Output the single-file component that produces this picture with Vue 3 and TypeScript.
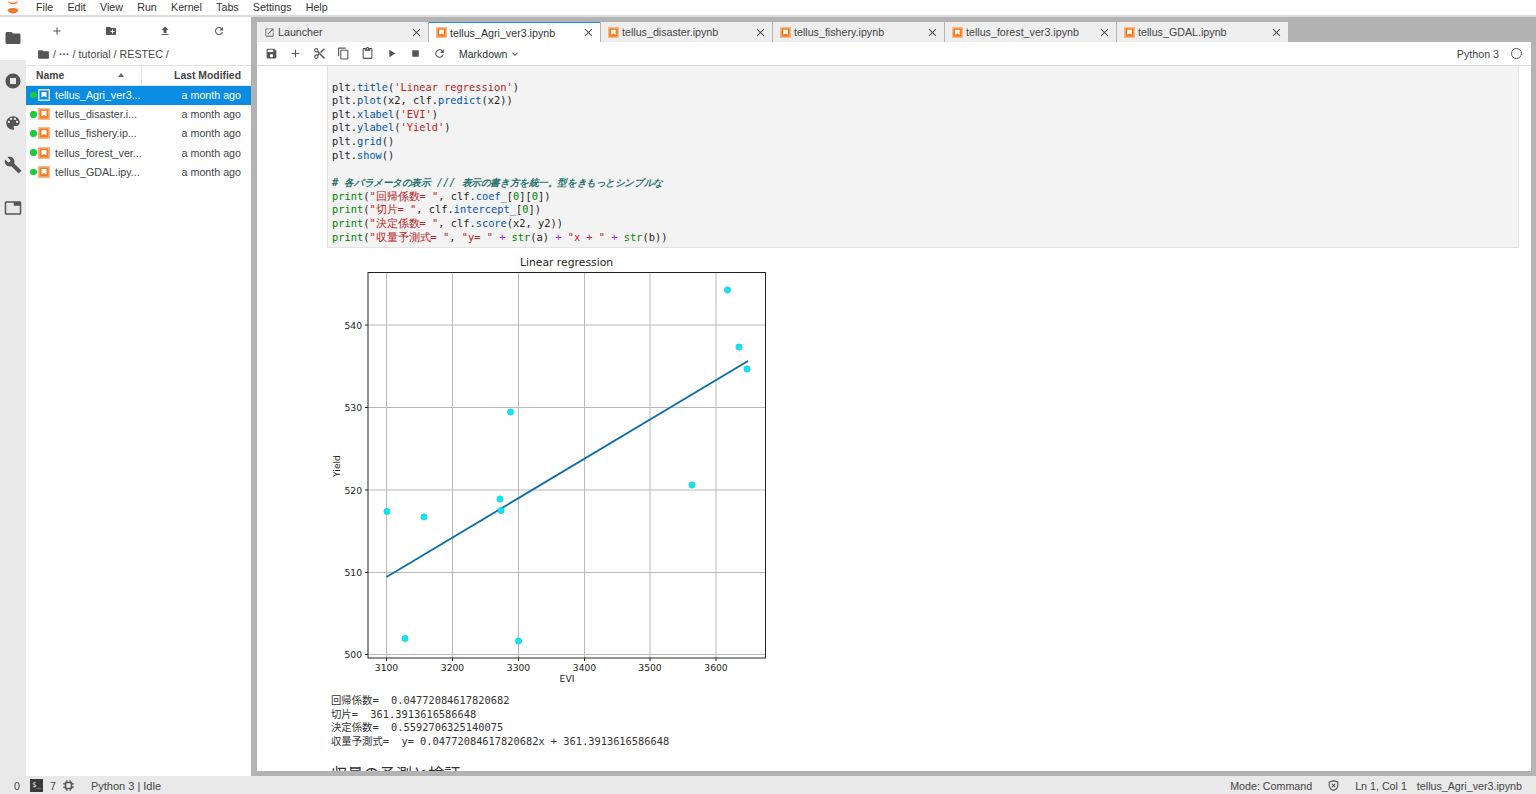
<template>
  <div class="lab">
    <div class="menubar">
      <svg class="logo" viewBox="0 0 14 16">
        <path d="M1.5 1.5c2 3 8.500 3 11 0-1 5-10 5-11 0z" fill="#f37726" />
        <path d="M1.500 11c2 -2.600 8.500 -2.600 11 0-1.500 4.500-9.500 4.500-11 0z" fill="#f37726" />
      </svg>
      <span v-for="m in menus" :key="m" class="menu-item">{{ m }}</span>
    </div>

    <div class="main">
      <div class="sidetabs">
        <div class="sidetab active">
          <svg viewBox="0 0 24 24"><path :d="icons.folder" /></svg>
        </div>
        <div class="sidetab"><svg viewBox="0 0 24 24"><path :d="icons.running" /></svg></div>
        <div class="sidetab"><svg viewBox="0 0 24 24"><path :d="icons.palette" /></svg></div>
        <div class="sidetab"><svg viewBox="0 0 24 24"><path :d="icons.build" /></svg></div>
        <div class="sidetab last"><svg viewBox="0 0 24 24"><path :d="icons.tab" /></svg></div>
      </div>

      <div class="filebrowser">
        <div class="fb-toolbar">
          <svg v-for="i in fbTools" :key="i" viewBox="0 0 24 24"><path :d="icons[i]" /></svg>
        </div>
        <div class="crumbs">
          <svg viewBox="0 0 24 24"><path :d="icons.folder" /></svg>
          <span>/ <b>···</b> / tutorial / RESTEC /</span>
        </div>
        <div class="list-head">
          <div class="col-name">
            <span>Name</span>
            <i class="sort-arrow"></i>
          </div>
          <div class="col-mod">Last Modified</div>
        </div>
        <div
          v-for="(f, idx) in files"
          :key="f"
          class="file-row"
          :class="{ selected: idx === 0 }"
        >
          <i class="running-dot"></i>
          <svg class="nb-icon" viewBox="0 0 12 12">
            <rect x="0" y="0" width="12" height="12" rx="0.500" class="nb-outer" />
            <rect x="1.500" y="1.500" width="9" height="9" class="nb-inner" />
            <path d="M3.500 3h5v5.500l-2.500-1.500-2.500 1.500z" class="nb-mark" />
          </svg>
          <span class="file-name">{{ f }}</span>
          <span class="file-date">a month ago</span>
        </div>
      </div>

      <div class="dock">
        <div class="tabbar">
          <div
            v-for="(t, idx) in tabs"
            :key="t"
            class="tab"
            :class="{ current: idx === 1 }"
          >
            <svg v-if="idx === 0" class="tab-icon" viewBox="0 0 24 24"><path :d="icons.launch" /></svg>
            <svg v-else class="tab-icon" viewBox="0 0 12 12">
              <rect x="0" y="0" width="12" height="12" fill="#f9b888" />
              <rect x="1.500" y="1.500" width="9" height="9" fill="#f57c20" />
              <path d="M3.500 3h5v5.500l-2.500-1.500-2.500 1.500z" fill="#fff" />
            </svg>
            <span class="tab-label">{{ t }}</span>
            <svg class="tab-close" viewBox="0 0 24 24"><path :d="icons.close" /></svg>
          </div>
        </div>

        <div class="nb-toolbar">
          <svg v-for="b in nbTools" :key="b" class="tool" viewBox="0 0 24 24"><path :d="icons[b]" /></svg>
          <span class="cell-type">Markdown</span>
          <svg class="chev" viewBox="0 0 24 24"><path :d="icons.chevron" /></svg>
          <span class="kernel-name">Python 3</span>
          <i class="kernel-idle"></i>
        </div>

        <div class="notebook">
          <pre class="code-cell"><code><span class="n">plt</span>.<span class="m">title</span>(<span class="s">'Linear regression'</span>)
<span class="n">plt</span>.<span class="m">plot</span>(x2, clf.<span class="m">predict</span>(x2))
<span class="n">plt</span>.<span class="m">xlabel</span>(<span class="s">'EVI'</span>)
<span class="n">plt</span>.<span class="m">ylabel</span>(<span class="s">'Yield'</span>)
<span class="n">plt</span>.<span class="m">grid</span>()
<span class="n">plt</span>.<span class="m">show</span>()

<span class="c"># <span class="jc">各パラメータの表示</span> /// <span class="jc">表示の書き方を統一。型をきもっとシンプルな</span></span>
<span class="b">print</span>(<span class="s">"<span class="j">回帰係数</span>= "</span>, clf.<span class="m">coef_</span>[<span class="d">0</span>][<span class="d">0</span>])
<span class="b">print</span>(<span class="s">"<span class="j">切片</span>= "</span>, clf.<span class="m">intercept_</span>[<span class="d">0</span>])
<span class="b">print</span>(<span class="s">"<span class="j">決定係数</span>= "</span>, clf.<span class="m">score</span>(x2, y2))
<span class="b">print</span>(<span class="s">"<span class="j">収量予測式</span>= "</span>, <span class="s">"y= "</span> <span class="o">+</span> <span class="b">str</span>(a) <span class="o">+</span> <span class="s">"x + "</span> <span class="o">+</span> <span class="b">str</span>(b))</code></pre>

          <svg class="chart" viewBox="327 255 460 435" width="460" height="435">
            <g stroke="#b9b9b9" stroke-width="1" fill="none">
              <line v-for="t in xTicks" :key="t.l" :x1="t.x" :x2="t.x" y1="272.500" y2="658" />
              <line v-for="t in yTicks" :key="t.l" x1="368" x2="765.500" :y1="t.y" :y2="t.y" />
            </g>
            <g stroke="#222" stroke-width="1">
              <line v-for="t in xTicks" :key="t.l" :x1="t.x" :x2="t.x" y1="658" y2="661" />
              <line v-for="t in yTicks" :key="t.l" x1="365" x2="368" :y1="t.y" :y2="t.y" />
            </g>
            <line x1="386.500" y1="577" x2="748" y2="361" stroke="#0a6fa8" stroke-width="1.800" />
            <circle
              v-for="(p, i) in points"
              :key="i"
              :cx="p[0]"
              :cy="p[1]"
              r="3.200"
              fill="#0ee6f8"
              stroke="#2ab5c8"
              stroke-width="0.500"
            />
            <rect x="368" y="272.500" width="397.500" height="385.500" fill="none" stroke="#222" stroke-width="1" />
            <g class="ticks">
              <text v-for="t in xTicks" :key="t.l" :x="t.x" y="671" text-anchor="middle">{{ t.l }}</text>
              <text v-for="t in yTicks" :key="t.l" x="362" :y="t.y + 3.500" text-anchor="end">{{ t.l }}</text>
              <text x="567" y="682" text-anchor="middle">EVI</text>
              <text x="0" y="0" text-anchor="middle" transform="translate(340 466) rotate(-90)">Yield</text>
            </g>
            <text class="chart-title" x="566.500" y="266" text-anchor="middle">Linear regression</text>
          </svg>

          <pre class="stdout">回帰係数=  0.04772084617820682
切片=  361.3913616586648
決定係数=  0.5592706325140075
収量予測式=  y= 0.04772084617820682x + 361.3913616586648</pre>

          <h2 class="next-heading">収量の予測と検証</h2>
        </div>
      </div>
    </div>

    <div class="statusbar">
      <span class="st-count">0</span>
      <span class="term-badge">$_</span>
      <span class="st-count st-seven">7</span>
      <svg class="chip" viewBox="0 0 24 24"><path :d="icons.chip" fill-rule="evenodd" /></svg>
      <span class="st-kernel">Python 3 | Idle</span>
      <span class="st-mode">Mode: Command</span>
      <svg class="shield" viewBox="0 0 24 24">
        <path d="M12 3l8 3v5c0 5-3.500 8.500-8 10-4.500-1.500-8-5-8-10V6z" fill="none" stroke="#555" stroke-width="2" />
        <path d="M9 9l6 6M15 9l-6 6" stroke="#555" stroke-width="2" />
      </svg>
      <span class="st-pos">Ln 1, Col 1</span>
      <span class="st-file">tellus_Agri_ver3.ipynb</span>
    </div>
  </div>
</template>

<script setup lang="ts">
const menus = ['File', 'Edit', 'View', 'Run', 'Kernel', 'Tabs', 'Settings', 'Help']

const files = [
  'tellus_Agri_ver3...',
  'tellus_disaster.i...',
  'tellus_fishery.ip...',
  'tellus_forest_ver...',
  'tellus_GDAL.ipy...',
]

const tabs = [
  'Launcher',
  'tellus_Agri_ver3.ipynb',
  'tellus_disaster.ipynb',
  'tellus_fishery.ipynb',
  'tellus_forest_ver3.ipynb',
  'tellus_GDAL.ipynb',
]

const icons: Record<string, string> = {
  folder: 'M10 4H4c-1.100 0-2 .9-2 2v12c0 1.100.9 2 2 2h16c1.100 0 2-.9 2-2V8c0-1.100-.9-2-2-2h-8l-2-2z',
  newFolder:
    'M20 6h-8l-2-2H4c-1.110 0-1.990.89-1.990 2L2 18c0 1.110.89 2 2 2h16c1.110 0 2-.89 2-2V8c0-1.110-.89-2-2-2zm-1 8h-3v3h-2v-3h-3v-2h3V9h2v3h3v2z',
  add: 'M19 13h-6v6h-2v-6H5v-2h6V5h2v6h6v2z',
  upload: 'M9 16h6v-6h4l-7-7-7 7h4v6zm-4 2h14v2H5z',
  refresh:
    'M17.650 6.350C16.200 4.900 14.210 4 12 4c-4.420 0-7.990 3.580-7.990 8s3.570 8 7.990 8c3.730 0 6.840-2.550 7.730-6h-2.080c-.82 2.330-3.040 4-5.650 4-3.310 0-6-2.690-6-6s2.690-6 6-6c1.660 0 3.140.69 4.220 1.780L13 11h7V4l-2.350 2.350z',
  save: 'M17 3H5c-1.110 0-2 .9-2 2v14c0 1.100.89 2 2 2h14c1.100 0 2-.9 2-2V7l-4-4zm-5 16c-1.660 0-3-1.340-3-3s1.340-3 3-3 3 1.340 3 3-1.340 3-3 3zm3-10H5V5h10v4z',
  cut: 'M9.640 7.640c.23-.5.36-1.050.36-1.640 0-2.210-1.790-4-4-4S2 3.790 2 6s1.790 4 4 4c.59 0 1.140-.13 1.640-.36L10 12l-2.360 2.360C7.140 14.130 6.590 14 6 14c-2.210 0-4 1.790-4 4s1.790 4 4 4 4-1.790 4-4c0-.59-.13-1.140-.36-1.640L12 14l7 7h3v-1L9.640 7.640zM6 8c-1.100 0-2-.89-2-2s.9-2 2-2 2 .89 2 2-.9 2-2 2zm0 12c-1.100 0-2-.89-2-2s.9-2 2-2 2 .89 2 2-.9 2-2 2zm6-7.500c-.28 0-.5-.22-.5-.5s.22-.5.5-.5.5.22.5.5-.22.5-.5.5zM19 3l-6 6 2 2 7-7V3z',
  copy: 'M16 1H4c-1.100 0-2 .9-2 2v14h2V3h12V1zm3 4H8c-1.100 0-2 .9-2 2v14c0 1.100.9 2 2 2h11c1.100 0 2-.9 2-2V7c0-1.100-.9-2-2-2zm0 16H8V7h11v14z',
  paste:
    'M19 2h-4.180C14.400.84 13.300 0 12 0c-1.300 0-2.400.84-2.820 2H5c-1.100 0-2 .9-2 2v16c0 1.100.9 2 2 2h14c1.100 0 2-.9 2-2V4c0-1.100-.9-2-2-2zm-7 0c.55 0 1 .45 1 1s-.45 1-1 1-1-.45-1-1 .45-1 1-1zm7 18H5V4h2v3h10V4h2v16z',
  play: 'M8 5v14l11-7z',
  stop: 'M6 6h12v12H6z',
  chevron: 'M7.410 8.590L12 13.170l4.590-4.580L18 10l-6 6-6-6 1.410-1.410z',
  running: 'M12 2C6.500 2 2 6.500 2 12s4.500 10 10 10 10-4.500 10-10S17.500 2 12 2zm4 14H8V8h8v8z',
  palette:
    'M12 3c-4.970 0-9 4.030-9 9s4.030 9 9 9c.83 0 1.500-.67 1.500-1.500 0-.39-.15-.74-.39-1.010-.23-.26-.38-.61-.38-.99 0-.83.67-1.500 1.500-1.500H16c2.760 0 5-2.240 5-5 0-4.420-4.030-8-9-8zm-5.500 9c-.83 0-1.500-.67-1.500-1.500S5.670 9 6.500 9 8 9.670 8 10.500 7.330 12 6.500 12zm3-4C8.670 8 8 7.330 8 6.500S8.670 5 9.500 5s1.500.67 1.500 1.500S10.330 8 9.500 8zm5 0c-.83 0-1.500-.67-1.500-1.500S13.670 5 14.500 5s1.500.67 1.500 1.500S15.330 8 14.500 8zm3 4c-.83 0-1.500-.67-1.500-1.500S16.670 9 17.500 9s1.500.67 1.500 1.500-.67 1.500-1.500 1.500z',
  build:
    'M22.700 19l-9.100-9.100c.9-2.300.4-5-1.500-6.900-2-2-5-2.400-7.400-1.300L9 6 6 9 1.600 4.700C.4 7.100.9 10.100 2.900 12.100c1.900 1.900 4.600 2.400 6.900 1.500l9.100 9.100c.4.4 1 .4 1.400 0l2.300-2.300c.5-.4.5-1.100.1-1.400z',
  tab: 'M21 3H3c-1.100 0-2 .9-2 2v14c0 1.100.9 2 2 2h18c1.100 0 2-.9 2-2V5c0-1.100-.9-2-2-2zm0 16H3V5h10v4h8v10z',
  launch:
    'M19 19H5V5h7V3H5c-1.110 0-2 .9-2 2v14c0 1.100.89 2 2 2h14c1.100 0 2-.9 2-2v-7h-2v7zM14 3v2h3.590l-9.830 9.830 1.410 1.410L19 6.410V10h2V3h-7z',
  close:
    'M19 6.410L17.590 5 12 10.590 6.410 5 5 6.410 10.590 12 5 17.590 6.410 19 12 13.410 17.590 19 19 17.590 13.410 12 19 6.410z',
  chip: 'M7 5h10a2 2 0 0 1 2 2v10a2 2 0 0 1-2 2H7a2 2 0 0 1-2-2V7a2 2 0 0 1 2-2zm2 3a1 1 0 0 0-1 1v6a1 1 0 0 0 1 1h6a1 1 0 0 0 1-1V9a1 1 0 0 0-1-1zM8 2h2v3H8zm6 0h2v3h-2zM8 19h2v3H8zm6 0h2v3h-2zM2 8h3v2H2zm0 6h3v2H2zm17-6h3v2h-3zm0 6h3v2h-3z',
}

const fbTools = ['add', 'newFolder', 'upload', 'refresh']
const nbTools = ['save', 'add', 'cut', 'copy', 'paste', 'play', 'stop', 'refresh']

const xTicks = [
  { l: '3100', x: 386.5 },
  { l: '3200', x: 452.5 },
  { l: '3300', x: 518.5 },
  { l: '3400', x: 584.5 },
  { l: '3500', x: 650 },
  { l: '3600', x: 716 },
]

const yTicks = [
  { l: '500', y: 654.5 },
  { l: '510', y: 572.5 },
  { l: '520', y: 490 },
  { l: '530', y: 407.5 },
  { l: '540', y: 325 },
]

const points: [number, number][] = [
  [727.5, 290],
  [739, 347],
  [747, 369],
  [510.5, 412],
  [692, 485],
  [500, 499],
  [501, 510.5],
  [387, 511.5],
  [424, 517],
  [405, 638.5],
  [518.5, 641],
]
</script>

<style>
html,
body {
  margin: 0;
  background: #b0b0b0;
}
</style>

<style scoped>
.lab {
  width: 1536px;
  height: 794px;
  display: flex;
  flex-direction: column;
  overflow: hidden;
  background: #b3b3b3;
  color: #3a3a3a;
  font-family: "Liberation Sans", Arial, sans-serif;
  font-size: 10.700px;
}

.menubar {
  height: 15px;
  flex: none;
  display: flex;
  align-items: center;
  gap: 14.200px;
  box-sizing: content-box;
  background: #fff;
  padding-left: 36px;
  border-bottom: 2px solid #dcdcdc;
  position: relative;
  color: #333;
}

.menu-item {
  margin-top: -2px;
}

.logo {
  position: absolute;
  left: 6px;
  top: -1px;
  width: 14px;
  height: 16px;
}

.main {
  flex: 1;
  display: flex;
  min-height: 0;
}

.sidetabs {
  width: 26px;
  flex: none;
  background: #e9e9e9;
  display: flex;
  flex-direction: column;
}

.sidetab {
  height: 42px;
  display: flex;
  align-items: center;
  justify-content: center;
}

.sidetab.active {
  background: #fff;
  height: 41px;
  padding-bottom: 2px;
}

.sidetab.last {
  padding-top: 1px;
}

.sidetab svg {
  width: 18px;
  height: 18px;
  fill: #555;
}

.filebrowser {
  width: 225px;
  flex: none;
  background: #fff;
  margin-right: 6px;
}

.fb-toolbar {
  height: 28px;
  display: flex;
  align-items: center;
  padding-left: 25px;
  gap: 42px;
}

.fb-toolbar svg {
  width: 12px;
  height: 12px;
  fill: #555;
}

.crumbs {
  height: 18px;
  padding-bottom: 2px;
  display: flex;
  align-items: center;
  gap: 3px;
  padding-left: 11px;
  color: #444;
  border-bottom: 1px solid #e4e4e4;
}

.crumbs svg {
  width: 13px;
  height: 13px;
  fill: #555;
}

.list-head {
  height: 18.500px;
  display: flex;
  align-items: center;
  font-weight: 700;
  color: #444;
  font-size: 10.400px;
  border-bottom: 1px solid #e4e4e4;
}

.col-name {
  width: 116px;
  height: 100%;
  box-sizing: border-box;
  display: flex;
  align-items: center;
  justify-content: space-between;
  padding: 0 17px 0 10px;
  border-right: 1px solid #e4e4e4;
}

.sort-arrow {
  width: 0;
  height: 0;
  border-left: 3.500px solid transparent;
  border-right: 3.500px solid transparent;
  border-bottom: 4px solid #666;
}

.col-mod {
  flex: 1;
  text-align: right;
  padding-right: 10px;
}

.file-row {
  height: 19.200px;
  display: flex;
  align-items: center;
  padding: 0 10px 0 4px;
  color: #444;
}

.file-row.selected {
  background: #0a8ce2;
  color: #fff;
}

.running-dot {
  width: 6.500px;
  height: 6.500px;
  border-radius: 50%;
  background: #18cc3c;
  flex: none;
}

.nb-icon {
  width: 12px;
  height: 12px;
  margin-left: 1.500px;
  flex: none;
}

.nb-outer {
  fill: #f9b888;
}
.nb-inner {
  fill: #f57c20;
}
.nb-mark {
  fill: #fff;
}

.selected .nb-outer {
  fill: #d6ebfa;
}
.selected .nb-inner {
  fill: #0a8ce2;
}

.file-name {
  margin-left: 5px;
  flex: 1;
  white-space: nowrap;
}

.file-date {
  white-space: nowrap;
}

.dock {
  flex: 1;
  min-width: 0;
  display: flex;
  flex-direction: column;
  padding: 5px 5px 5px 0;
}

.tabbar {
  height: 20px;
  flex: none;
  display: flex;
  gap: 1px;
}

.tab {
  width: 171px;
  box-sizing: border-box;
  display: flex;
  align-items: center;
  background: #eee;
  padding: 0 5px 0 7px;
  color: #444;
}

.tab.current {
  background: #fff;
  border-top: 1px solid #1d8fe0;
  color: #333;
}

.tab-icon {
  width: 11px;
  height: 11px;
  fill: #666;
  flex: none;
}

.tab-label {
  flex: 1;
  margin-left: 3px;
  white-space: nowrap;
}

.tab-close {
  width: 13px;
  height: 13px;
  fill: #555;
  flex: none;
}

.nb-toolbar {
  height: 23px;
  flex: none;
  display: flex;
  align-items: center;
  background: #fff;
  border-bottom: 1px solid #d8d8d8;
  padding: 0 8px;
}

.tool {
  width: 13px;
  height: 13px;
  fill: #555;
  margin-right: 11px;
  flex: none;
}

.cell-type {
  margin-left: 2px;
  color: #333;
  font-size: 10.500px;
}

.chev {
  width: 12px;
  height: 12px;
  fill: #666;
  margin-left: 2px;
}

.kernel-name {
  margin-left: auto;
  color: #444;
}

.kernel-idle {
  width: 9px;
  height: 9px;
  border: 1px solid #555;
  border-radius: 50%;
  margin-left: 12px;
  margin-right: 1px;
}

.notebook {
  flex: 1;
  min-height: 0;
  overflow: hidden;
  background: #fff;
  padding: 0 12px 0 70px;
}

.code-cell {
  margin: 0;
  height: 182px;
  box-sizing: border-box;
  background: #f3f3f3;
  border: 1px solid #e2e2e2;
  border-top: none;
  padding: 14.500px 4px 0 4px;
  font-family: "DejaVu Sans Mono", "Noto Sans CJK JP", monospace;
  font-size: 10.350px;
  line-height: 13.650px;
  color: #222;
}

.n {
  color: #222;
}
.m {
  color: #0055aa;
}
.s {
  color: #ba2121;
}
.b {
  color: #008000;
}
.d {
  color: #008800;
}
.o {
  color: #aa22ff;
}
.c {
  color: #2a7370;
  font-style: italic;
  font-weight: 700;
}
.j {
  font-size: 10.800px;
  line-height: 1;
}
.jc {
  font-size: 9.700px;
  letter-spacing: -0.430px;
  line-height: 1;
}

.chart {
  display: block;
  margin-top: 7px;
}

.ticks text {
  font-family: "DejaVu Sans", sans-serif;
  font-size: 9.200px;
  fill: #222;
}

.chart-title {
  font-family: "DejaVu Sans", sans-serif;
  font-size: 10.800px;
  fill: #222;
}

.stdout {
  margin: 4px 0 0 4px;
  font-family: "DejaVu Sans Mono", "Noto Sans CJK JP", monospace;
  font-size: 10.350px;
  line-height: 13.650px;
  color: #333;
}

.next-heading {
  margin: 15px 0 0 4px;
  font-family: "Liberation Sans", "Noto Sans CJK JP", sans-serif;
  font-size: 16.200px;
  line-height: 20px;
  font-weight: 400;
  color: #333;
}

.statusbar {
  height: 18px;
  box-sizing: border-box;
  flex: none;
  display: flex;
  align-items: center;
  background: #e9e9e9;
  color: #444;
  padding: 1px 14px 0;
  font-size: 10.700px;
}

.term-badge {
  width: 13px;
  height: 13px;
  margin-left: 10px;
  background: #3b3b3b;
  color: #eee;
  font-family: "DejaVu Sans Mono", monospace;
  font-size: 7px;
  line-height: 13px;
  text-align: center;
}

.st-seven {
  margin-left: 7px;
}

.chip {
  width: 13px;
  height: 13px;
  fill: #555;
  margin-left: 6px;
}

.st-kernel {
  margin-left: 16px;
  font-size: 11px;
}

.st-mode {
  margin-left: auto;
}

.shield {
  width: 13px;
  height: 13px;
  margin-left: 15px;
}

.st-pos {
  margin-left: 15px;
}

.st-file {
  margin-left: 10px;
}
</style>
